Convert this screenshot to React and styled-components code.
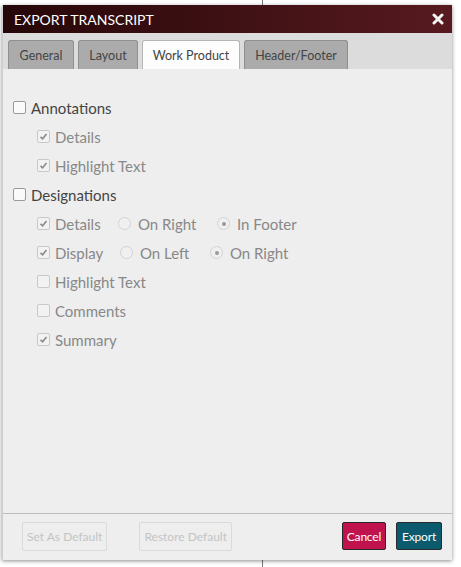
import React from 'react'
import styled, { createGlobalStyle } from 'styled-components'

const Global = createGlobalStyle`
  html, body { margin: 0; padding: 0; background: #fff; }
  body { font-family: Lato, "Open Sans", sans-serif; }
`;

const Page = styled.div`
  position: relative;
  width: 461px;
  height: 567px;
  background: #fff;
  padding: 5px 9px 7px 2px;
  box-sizing: border-box;

  &::before {
    content: '';
    position: absolute;
    left: 262px;
    top: 0;
    bottom: 0;
    width: 1px;
    background: #777;
  }
`;

const Dialog = styled.div`
  position: relative;
  z-index: 1;
  height: 100%;
  display: flex;
  flex-direction: column;
  background: #eeeeee;
  box-shadow: 0 1px 4px rgba(0, 0, 0, 0.45);
  border-left: 1px solid #cfcfcf;
`;

const TitleBar = styled.div`
  height: 28px;
  display: flex;
  align-items: center;
  justify-content: space-between;
  padding: 0 8px 0 11px;
  background: linear-gradient(to right, #260709, #571a1f);
  color: #fff;
  font-size: 14px;
`;

const TabBar = styled.div`
  display: flex;
  align-items: flex-end;
  gap: 4px;
  height: 36px;
  padding: 0 0 0 5px;
  background: #dcdcdc;
`;

const Tab = styled.div`
  width: ${p => p.$w}px;
  height: 29px;
  box-sizing: border-box;
  display: flex;
  align-items: center;
  justify-content: center;
  font-size: 12.5px;
  color: #444;
  border: 1px solid ${p => (p.$active ? '#b5b5b5' : '#8f8f8f')};
  border-bottom: none;
  border-radius: 3px 3px 0 0;
  background: ${p => (p.$active ? '#fdfdfd' : '#ababab')};
`;

const Content = styled.div`
  flex: 1;
  padding: 24px 0 0 10px;
  display: flex;
  flex-direction: column;
`;

const Row = styled.div`
  height: 29px;
  display: flex;
  align-items: center;
  padding-left: ${p => (p.$sub ? 24 : 0)}px;
  font-size: 15px;
  color: ${p => (p.$sub ? '#888' : '#444')};
`;

const Box = styled.span`
  width: 11px;
  height: 11px;
  margin-right: 5px;
  border: 1px solid ${p => (p.$sub ? '#c9c9c9' : '#9a9a9a')};
  border-radius: 2px;
  background: ${p => (p.$sub ? '#f2f2f2' : '#fafafa')};
  display: inline-flex;
  align-items: center;
  justify-content: center;
  flex-shrink: 0;
`;

const Radio = styled.span`
  width: 11px;
  height: 11px;
  margin: 0 7px 0 ${p => p.$gap}px;
  border: 1px solid #d2d2d2;
  border-radius: 50%;
  background: #f0f0f0;
  display: inline-flex;
  align-items: center;
  justify-content: center;
  flex-shrink: 0;

  &::after {
    content: '';
    width: 4px;
    height: 4px;
    border-radius: 50%;
    background: ${p => (p.$on ? '#9a9a9a' : 'transparent')};
  }
`;

const Label = styled.span`
  width: ${p => (p.$w ? p.$w + 'px' : 'auto')};
`;

const Footer = styled.div`
  height: 44px;
  border-top: 1px solid #bdbdbd;
  display: flex;
  align-items: center;
  padding: 0 10px 2px 19px;
`;

const GhostButton = styled.div`
  height: 27px;
  padding: 0 4px;
  margin-right: ${p => p.$mr}px;
  display: flex;
  align-items: center;
  border: 1px solid #dadada;
  border-radius: 2px;
  font-size: 12px;
  color: #c4c4c4;
`;

const Spacer = styled.div`
  flex: 1;
`;

const ActionButton = styled.div`
  height: 26px;
  padding: 0 ${p => p.$pad}px;
  margin-left: ${p => p.$ml || 0}px;
  display: flex;
  align-items: center;
  border: 1px solid #2a2a2a;
  border-radius: 2px;
  font-size: 12px;
  letter-spacing: -0.2px;
  color: #fff;
  background: ${p => p.$bg};
`;

function CloseIcon() {
  return (
    <svg width="12" height="12" viewBox="0 0 12 12">
      <path d="M2 2 L10 10 M10 2 L2 10" stroke="#f4f4f4" strokeWidth="3" strokeLinecap="round" />
    </svg>
  );
}

function Check({ on, sub }) {
  return (
    <Box $sub={sub}>
      {on && (
        <svg width="9" height="9" viewBox="0 0 9 9">
          <path d="M1.5 4.8 L3.6 6.8 L7.5 2" fill="none" stroke="#8a8a8a" strokeWidth="1.6" />
        </svg>
      )}
    </Box>
  );
}

export default function App() {
  return (
    <Page>
      <Global />
      <Dialog>
        <TitleBar>
          <span>EXPORT TRANSCRIPT</span>
          <CloseIcon />
        </TitleBar>
        <TabBar>
          <Tab $w={66}>General</Tab>
          <Tab $w={60}>Layout</Tab>
          <Tab $w={98} $active>Work Product</Tab>
          <Tab $w={104}>Header/Footer</Tab>
        </TabBar>
        <Content>
          <Row><Check /><Label>Annotations</Label></Row>
          <Row $sub><Check sub on /><Label>Details</Label></Row>
          <Row $sub><Check sub on /><Label>Highlight Text</Label></Row>
          <Row><Check /><Label>Designations</Label></Row>
          <Row $sub>
            <Check sub on /><Label $w={50}>Details</Label>
            <Radio $gap={13} /><Label $w={70}>On Right</Label>
            <Radio $gap={9} $on /><Label>In Footer</Label>
          </Row>
          <Row $sub>
            <Check sub on /><Label $w={52}>Display</Label>
            <Radio $gap={13} /><Label $w={61}>On Left</Label>
            <Radio $gap={9} $on /><Label>On Right</Label>
          </Row>
          <Row $sub><Check sub /><Label>Highlight Text</Label></Row>
          <Row $sub><Check sub /><Label>Comments</Label></Row>
          <Row $sub><Check sub on /><Label>Summary</Label></Row>
        </Content>
        <Footer>
          <GhostButton $mr={32}>Set As Default</GhostButton>
          <GhostButton $mr={0}>Restore Default</GhostButton>
          <Spacer />
          <ActionButton $bg="#c0134d" $pad={4}>Cancel</ActionButton>
          <ActionButton $bg="#0c5a6d" $pad={5} $ml={10}>Export</ActionButton>
        </Footer>
      </Dialog>
    </Page>
  );
}
